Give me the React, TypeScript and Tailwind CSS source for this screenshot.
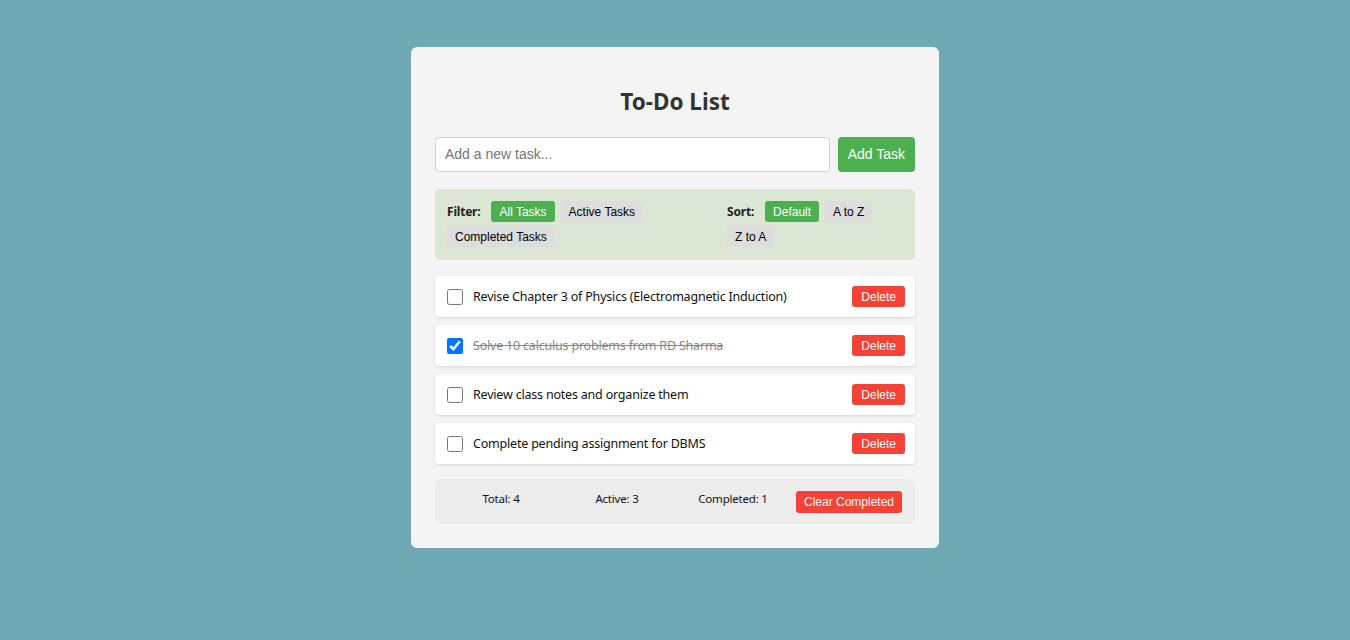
import React from "react";

const seg = "font-['Noto_Sans','Open_Sans',sans-serif]";
const arial = "font-['Liberation_Sans',Arial,sans-serif]";

const tasks = [
  { text: "Revise Chapter 3 of Physics (Electromagnetic Induction)", done: false },
  { text: "Solve 10 calculus problems from RD Sharma", done: true },
  { text: "Review class notes and organize them", done: false },
  { text: "Complete pending assignment for DBMS", done: false },
];

function Chip({ label, active }: { label: string; active?: boolean }) {
  return (
    <button
      className={`${arial} h-[21px] px-2 text-[12px] rounded-[3px] leading-none ${
        active ? "bg-[#4caf50] text-white" : "bg-[#dddddd] text-black"
      }`}
    >
      {label}
    </button>
  );
}

export default function App() {
  return (
    <div className="min-h-[640px] w-full bg-[#6fa9b3] pt-[47px]">
      <div className={`${seg} mx-auto w-[528px] rounded-[6px] bg-[#f4f4f4] p-6`}>
        <h2 className="mt-[16px] mb-[20px] h-[30px] text-center text-[22.5px] font-bold leading-[30px] text-[#333333]">
          To-Do List
        </h2>
        <div className="flex h-[35px] gap-2">
          <input
            className={`${arial} flex-1 rounded-[4px] border border-[#d0d0d0] bg-white px-[9px] text-[14px] text-black outline-none placeholder:text-[#757575]`}
            placeholder="Add a new task..."
          />
          <button className={`${arial} rounded-[4px] bg-[#4caf50] px-[10px] text-[14px] text-white`}>
            Add Task
          </button>
        </div>

        <div className="mt-[17px] flex rounded-[5px] bg-[#dce6d4] px-3 pt-3 pb-[13px]">
          <div className="flex w-[280px] flex-wrap items-center gap-x-[6px] gap-y-[4px]">
            <span className="mr-[5px] text-[12px] font-bold tracking-[-0.2px] text-[#222]">Filter:</span>
            <Chip label="All Tasks" active />
            <Chip label="Active Tasks" />
            <Chip label="Completed Tasks" />
          </div>
          <div className="flex flex-1 flex-wrap content-start items-center gap-x-[6px] gap-y-[4px]">
            <span className="mr-[5px] text-[12px] font-bold tracking-[-0.2px] text-[#222]">Sort:</span>
            <Chip label="Default" active />
            <Chip label="A to Z" />
            <Chip label="Z to A" />
          </div>
        </div>

        <div className="mt-4 flex flex-col gap-2">
          {tasks.map((t) => (
            <div
              key={t.text}
              className="flex h-[41px] items-center rounded-[4px] bg-white pl-3 pr-[10px] shadow-[0_1px_3px_rgba(0,0,0,0.12)]"
            >
              <input
                type="checkbox"
                defaultChecked={t.done}
                className="m-0 h-4 w-4 accent-[#0075ff]"
              />
              <span
                className={`ml-[10px] flex-1 pt-[1px] text-[12.5px] tracking-[-0.2px] ${
                  t.done ? "text-[#888888] line-through" : "text-[#111111]"
                }`}
              >
                {t.text}
              </span>
              <button
                className={`${arial} h-[21px] rounded-[3px] bg-[#f44336] px-[9px] text-[12px] leading-none text-white`}
              >
                Delete
              </button>
            </div>
          ))}
        </div>

        <div className="mt-[15px] flex h-[45px] items-center rounded-[6px] bg-[#ececec] px-2 text-[11.5px] tracking-[-0.2px] text-[#111]">
          <div className="flex-1 pb-[6px] text-center">Total: 4</div>
          <div className="flex-1 pb-[6px] text-center">Active: 3</div>
          <div className="flex-1 pb-[6px] text-center">Completed: 1</div>
          <div className="flex flex-1 justify-center">
            <button className={`${arial} h-[22px] rounded-[3px] bg-[#f44336] px-2 text-[12px] leading-none tracking-normal text-white`}>
              Clear Completed
            </button>
          </div>
        </div>
      </div>
    </div>
  );
}
